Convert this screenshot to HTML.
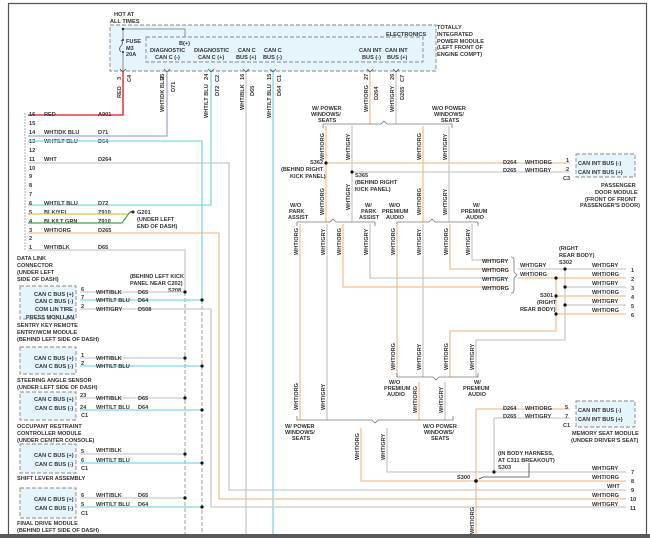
<!DOCTYPE html>
<html><head><meta charset="utf-8">
<style>
html,body{margin:0;padding:0;background:#fff;width:650px;height:538px;overflow:hidden}
svg{display:block}
text{font-family:"Liberation Sans",sans-serif;font-size:5.6px;fill:#333;font-weight:bold}
.o{stroke:#f5bf8e;stroke-width:1.3;fill:none}
.g{stroke:#c9c9c9;stroke-width:1.3;fill:none}
.c{stroke:#7ed9e3;stroke-width:1.3;fill:none}
.k{stroke:#777;stroke-width:0.8;fill:none}
.d{stroke:#888;stroke-width:0.8;stroke-dasharray:4 2;fill:none}
.bx{fill:#e6f5fb;stroke:#888;stroke-width:0.9;stroke-dasharray:4 2}
</style></head><body>
<svg width="650" height="538" viewBox="0 0 650 538">
<rect x="0" y="0" width="650" height="538" fill="#fff"/>
<!-- frame -->
<path d="M8.5 538 V3.5 H646.5 V535" stroke="#555" stroke-width="1.2" fill="none"/>
<rect x="0" y="534" width="650" height="4" fill="#5a5a5a"/>

<!-- TIPM -->
<rect x="110" y="25" width="326" height="46" class="bx"/>
<rect x="146" y="37" width="277" height="25" fill="none" stroke="#888" stroke-width="0.9" stroke-dasharray="4 2"/>
<path d="M123 29 H185 V37 M123 29 V40 M123 52 V71" class="k" stroke="#555"/>
<path d="M121 40 q3 3 0 6 q-3 3 0 6" fill="none" stroke="#555" stroke-width="0.8"/>
<circle cx="123" cy="29" r="1.2" fill="#222"/><circle cx="123" cy="40" r="1" fill="#222"/><circle cx="123" cy="52" r="1" fill="#222"/>
<text x="114" y="16">HOT AT</text><text x="110" y="23">ALL TIMES</text>
<text x="126" y="43">FUSE</text><text x="126" y="50">M3</text><text x="126" y="56">20A</text>
<text x="179" y="45">B(+)</text>
<text x="150" y="52">DIAGNOSTIC</text><text x="155" y="59">CAN C (-)</text>
<text x="194" y="52">DIAGNOSTIC</text><text x="198" y="59">CAN C (+)</text>
<text x="238" y="52">CAN C</text><text x="236" y="59">BUS (+)</text>
<text x="264" y="52">CAN C</text><text x="263" y="59">BUS (-)</text>
<text x="386" y="36">ELECTRONICS</text>
<text x="359" y="52">CAN INT</text><text x="362" y="59">BUS (-)</text>
<text x="385" y="52">CAN INT</text><text x="387" y="59">BUS (+)</text>
<text x="437" y="29">TOTALLY</text><text x="437" y="36">INTEGRATED</text><text x="437" y="43">POWER MODULE</text><text x="437" y="49">(LEFT FRONT OF</text><text x="437" y="56">ENGINE COMPT)</text>
<g fill="none" stroke="#555" stroke-width="0.8">
<path d="M120 69 l3 3 l3 -3 M164 69 l3 3 l3 -3 M208 69 l3 3 l3 -3 M243 69 l3 3 l3 -3 M270 69 l3 3 l3 -3 M367 69 l3 3 l3 -3 M393 69 l3 3 l3 -3"/>
</g>

<!-- top vertical wires -->
<path d="M123 72 V115 H28" stroke="#f03a3a" stroke-width="1.6" fill="none"/>
<path d="M167 72 V136 H28" stroke="#a3a7dc" stroke-width="1.3" fill="none"/>
<path d="M211 72 V205 H28" class="c"/>
<path d="M246 72 V534" class="g"/>
<path d="M273 72 V534" class="c"/>
<path d="M370 72 V124" class="o"/>
<path d="M396 72 V124" class="g"/>
<g transform="rotate(-90)">
<text x="-80" y="121">3</text><text x="-82" y="131">C4</text><text x="-98" y="121">RED</text>
<text x="-80" y="164">25</text><text x="-112" y="164">WHT/DK BLU</text><text x="-92" y="175">D71</text>
<text x="-80" y="208">24</text><text x="-82" y="219">C2</text><text x="-118" y="208">WHT/LT BLU</text><text x="-96" y="219">D72</text>
<text x="-80" y="244">16</text><text x="-110" y="244">WHT/BLK</text><text x="-96" y="254">D65</text>
<text x="-80" y="271">15</text><text x="-82" y="281">C1</text><text x="-118" y="271">WHT/LT BLU</text><text x="-96" y="281">D64</text>
<text x="-80" y="368">27</text><text x="-112" y="368">WHT/ORG</text><text x="-100" y="378">D264</text>
<text x="-80" y="394">26</text><text x="-82" y="404">C7</text><text x="-112" y="394">WHT/GRY</text><text x="-100" y="404">D265</text>
</g>

<!-- DLC pins -->
<path d="M25 113 V250" stroke="#777" stroke-width="0.6" stroke-dasharray="2 1" fill="none"/>
<g>
<text x="29" y="116">16</text><text x="29" y="125">15</text><text x="29" y="134">14</text><text x="29" y="143">13</text><text x="29" y="152">12</text><text x="29" y="161">11</text><text x="29" y="170">10</text><text x="29" y="178">9</text><text x="29" y="187">8</text><text x="29" y="196">7</text><text x="29" y="205">6</text><text x="29" y="214">5</text><text x="29" y="223">4</text><text x="29" y="232">3</text><text x="29" y="240">2</text><text x="29" y="249">1</text>
<text x="44" y="116">RED</text><text x="98" y="116">A901</text>
<text x="44" y="134">WHT/DK BLU</text><text x="98" y="134">D71</text>
<text x="44" y="143">WHT/LT BLU</text><text x="98" y="143">D64</text>
<text x="44" y="161">WHT</text><text x="98" y="161">D264</text>
<text x="44" y="205">WHT/LT BLU</text><text x="98" y="205">D72</text>
<text x="44" y="214">BLK/YEL</text><text x="98" y="214">Z910</text>
<text x="44" y="223">BLK/LT GRN</text><text x="98" y="223">Z910</text>
<text x="44" y="232">WHT/ORG</text><text x="98" y="232">D265</text>
<text x="44" y="249">WHT/BLK</text><text x="98" y="249">D65</text>
</g>
<path d="M28 141 H202 V300" class="c"/>
<path d="M28 163 H229 V490 H626" class="g"/>
<path d="M28 214 H128 L132 211" stroke="#d8c84a" stroke-width="1.2" fill="none"/>
<path d="M28 223 H122 L130 212" stroke="#4aa04a" stroke-width="1.2" fill="none"/>
<path d="M130 212 H133" stroke="#333" stroke-width="1"/><circle cx="133" cy="212" r="1.5" fill="#222"/>
<text x="137" y="214">G201</text><text x="137" y="221">(UNDER LEFT</text><text x="137" y="228">END OF DASH)</text>
<path d="M28 233 H219 V499 H626" class="o"/>
<path d="M28 250 H185 V292" class="g"/>
<text x="17" y="260">DATA LINK</text><text x="17" y="267">CONNECTOR</text><text x="17" y="274">(UNDER LEFT</text><text x="17" y="281">SIDE OF DASH)</text>
<text x="130" y="278">(BEHIND LEFT KICK</text><text x="130" y="285">PANEL NEAR C202)</text><text x="168" y="292">S208</text>

<!-- dashed splice bars -->
<path d="M185 292 V534" class="d"/>
<path d="M202 300 V534" class="d"/>

<!-- left modules -->
<rect x="20" y="286" width="56" height="33" class="bx"/>
<text x="34" y="296">CAN C BUS (+)</text><text x="35" y="303">CAN C BUS (-)</text><text x="35" y="311">COM LIN TIRE</text><text x="26" y="319">PRESS MONI LAN</text>
<text x="17" y="327">SENTRY KEY REMOTE</text><text x="17" y="334">ENTRY/WCM MODULE</text><text x="17" y="341">(BEHIND LEFT SIDE OF DASH)</text>
<path d="M80 292 H185 M80 309 H211 V507 H626" class="g"/><path d="M80 300 H202" class="c"/>
<text x="81" y="291">6</text><text x="81" y="299">7</text><text x="81" y="308">2</text>
<text x="96" y="294">WHT/BLK</text><text x="138" y="294">D65</text><text x="96" y="302">WHT/LT BLU</text><text x="138" y="302">D64</text><text x="96" y="311">WHT/GRY</text><text x="138" y="311">D508</text>

<rect x="20" y="347" width="56" height="27" class="bx"/>
<text x="34" y="360">CAN C BUS (+)</text><text x="35" y="368">CAN C BUS (-)</text>
<text x="17" y="382">STEERING ANGLE SENSOR</text><text x="17" y="389">(UNDER LEFT SIDE OF DASH)</text>
<path d="M80 358 H185" class="g"/><path d="M80 366 H202" class="c"/>
<text x="81" y="357">1</text><text x="81" y="365">2</text><text x="96" y="360">WHT/BLK</text><text x="96" y="368">WHT/LT BLU</text>

<rect x="20" y="392" width="56" height="28" class="bx"/>
<text x="34" y="401">CAN C BUS (+)</text><text x="35" y="410">CAN C BUS (-)</text>
<text x="17" y="428">OCCUPANT RESTRAINT</text><text x="17" y="435">CONTROLLER MODULE</text><text x="17" y="442">(UNDER CENTER CONSOLE)</text>
<path d="M80 398 H185" class="g"/><path d="M80 410 H202" class="c"/>
<text x="80" y="397">23</text><text x="80" y="409">24</text><text x="81" y="417">C1</text><text x="96" y="400">WHT/BLK</text><text x="138" y="400">D65</text><text x="96" y="409">WHT/LT BLU</text><text x="138" y="409">D64</text>

<rect x="20" y="444" width="56" height="29" class="bx"/>
<text x="34" y="457">CAN C BUS (+)</text><text x="35" y="466">CAN C BUS (-)</text>
<text x="17" y="480">SHIFT LEVER ASSEMBLY</text>
<path d="M80 454 H185" class="g"/><path d="M80 463 H202" class="c"/>
<text x="81" y="453">5</text><text x="81" y="462">6</text><text x="81" y="470">C1</text><text x="96" y="452">WHT/BLK</text><text x="96" y="462">WHT/LT BLU</text>

<rect x="20" y="488" width="56" height="30" class="bx"/>
<text x="34" y="501">CAN C BUS (+)</text><text x="35" y="510">CAN C BUS (-)</text>
<text x="17" y="525">FINAL DRIVE MODULE</text><text x="17" y="532">(BEHIND LEFT SIDE OF DASH)</text>
<path d="M80 498 H185" class="g"/><path d="M80 507 H202" class="c"/>
<text x="81" y="497">6</text><text x="81" y="506">5</text><text x="81" y="515">C1</text><text x="96" y="497">WHT/BLK</text><text x="138" y="497">D65</text><text x="96" y="506">WHT/LT BLU</text><text x="138" y="506">D64</text>

<g fill="#111">
<circle cx="185" cy="292" r="1.6"/><circle cx="202" cy="300" r="1.6"/>
<circle cx="185" cy="358" r="1.6"/><circle cx="202" cy="366" r="1.6"/>
<circle cx="185" cy="398" r="1.6"/><circle cx="202" cy="410" r="1.6"/>
<circle cx="185" cy="454" r="1.6"/><circle cx="202" cy="463" r="1.6"/>
<circle cx="185" cy="498" r="1.6"/><circle cx="202" cy="507" r="1.6"/>
</g>

<!-- right top section -->
<path d="M323 128 V124 H381 L384 121 L387 124 H452 V128" class="k"/>
<text x="312" y="110">W/ POWER</text><text x="311" y="116">WINDOWS/</text><text x="318" y="122">SEATS</text>
<text x="432" y="110">W/O POWER</text><text x="434" y="116">WINDOWS/</text><text x="441" y="122">SEATS</text>
<path d="M326 126 V222" class="o"/><path d="M352 126 V222" class="g"/>
<path d="M423 126 V222" class="o"/><path d="M449 126 V222" class="g"/>
<path d="M326 163 H570" class="o"/><path d="M352 172 H570" class="g"/>
<circle cx="326" cy="163" r="1.6" fill="#111"/><circle cx="352" cy="172" r="1.6" fill="#111"/>
<text x="310" y="164">S362</text><text x="281" y="171">(BEHIND RIGHT</text><text x="290" y="178">KICK PANEL)</text>
<text x="355" y="177">S365</text><text x="355" y="184">(BEHIND RIGHT</text><text x="355" y="191">KICK PANEL)</text>
<text x="503" y="164">D264</text><text x="525" y="164">WHT/ORG</text><text x="566" y="162">1</text>
<text x="503" y="172">D265</text><text x="525" y="172">WHT/GRY</text><text x="566" y="171">2</text><text x="563" y="180">C3</text>
<rect x="576" y="154" width="59" height="23" class="bx"/>
<text x="578" y="165">CAN INT BUS (-)</text><text x="578" y="174">CAN INT BUS (+)</text>
<text x="601" y="187">PASSENGER</text><text x="595" y="194">DOOR MODULE</text><text x="585" y="201">(FRONT OF FRONT</text><text x="580" y="207">PASSENGER'S DOOR)</text>

<!-- brace 222 -->
<path d="M297 226 V222 H330 L333 219 L336 222 H375 V226" class="k"/>
<path d="M397 226 V222 H429 L432 219 L435 222 H478 V226" class="k"/>
<text x="290" y="207">W/O</text><text x="289" y="213">PARK</text><text x="288" y="219">ASSIST</text>
<text x="365" y="207">W/</text><text x="361" y="213">PARK</text><text x="359" y="219">ASSIST</text>
<text x="389" y="207">W/O</text><text x="382" y="213">PREMIUM</text><text x="386" y="219">AUDIO</text>
<text x="473" y="207">W/</text><text x="461" y="213">PREMIUM</text><text x="466" y="219">AUDIO</text>
<path d="M300 224 V420" class="o"/><path d="M327 224 V420" class="g"/>
<path d="M343 224 V287 H508" class="o"/><path d="M370 224 V278 H508" class="g"/>
<path d="M397 224 V377" class="o"/><path d="M423 224 V377" class="g"/>
<path d="M450 224 V269 H508" class="o"/><path d="M472 224 V260 H508" class="g"/>
<text x="482" y="263">WHT/GRY</text><text x="482" y="272">WHT/ORG</text><text x="482" y="281">WHT/GRY</text><text x="482" y="290">WHT/ORG</text>
<path d="M511 257 Q514 257 514 260 V272 L517 275 L514 278 V290 Q514 293 511 293" class="k"/>
<path d="M518 269 H626" class="g"/><path d="M518 278 H626" class="o"/>
<text x="520" y="267">WHT/GRY</text><text x="520" y="276">WHT/ORG</text>
<path d="M565 269 V340 H476 V377" class="g"/><path d="M556 278 V331 H450 V377" class="o"/>
<path d="M565 287 H626 M565 305 H626" class="g"/><path d="M556 296 H626 M556 314 H626" class="o"/>
<g fill="#111"><circle cx="565" cy="269" r="1.6"/><circle cx="556" cy="278" r="1.6"/><circle cx="565" cy="287" r="1.6"/><circle cx="556" cy="296" r="1.6"/><circle cx="565" cy="305" r="1.6"/><circle cx="556" cy="314" r="1.6"/></g>
<text x="559" y="250">(RIGHT</text><text x="559" y="257">REAR BODY)</text><text x="559" y="264">S302</text>
<text x="540" y="297">S301</text><text x="537" y="304">(RIGHT</text><text x="520" y="311">REAR BODY)</text>
<text x="592" y="267">WHT/GRY</text><text x="592" y="276">WHT/ORG</text><text x="592" y="285">WHT/GRY</text><text x="592" y="294">WHT/ORG</text><text x="592" y="303">WHT/GRY</text><text x="592" y="312">WHT/ORG</text>
<text x="631" y="272">1</text><text x="631" y="281">2</text><text x="631" y="290">3</text><text x="631" y="299">4</text><text x="631" y="308">5</text><text x="631" y="317">6</text>

<!-- brace 377 -->
<path d="M397 373 V377 H433 L436 380 L439 377 H478 V373" class="k"/>
<text x="389" y="384">W/O</text><text x="384" y="390">PREMIUM</text><text x="387" y="396">AUDIO</text>
<text x="474" y="384">W/</text><text x="463" y="390">PREMIUM</text><text x="468" y="396">AUDIO</text>
<path d="M419 382 V420" class="o"/><path d="M445 382 V420" class="g"/>

<!-- brace 420 -->
<path d="M297 416 V420 H372 L375 423 L378 420 H453 V416" class="k"/>
<text x="285" y="428">W/ POWER</text><text x="285" y="434">WINDOWS/</text><text x="292" y="440">SEATS</text>
<text x="423" y="428">W/O POWER</text><text x="424" y="434">WINDOWS/</text><text x="431" y="440">SEATS</text>
<path d="M361 428 V481 H626" class="o"/><path d="M387 428 V472 H626" class="g"/>

<!-- memory seat -->
<path d="M476 534 V409 H570" class="o"/><path d="M494 472 V418 H570" class="g"/>
<text x="503" y="410">D264</text><text x="525" y="410">WHT/ORG</text><text x="565" y="409">5</text>
<text x="503" y="418">D265</text><text x="525" y="418">WHT/GRY</text><text x="565" y="418">7</text><text x="563" y="427">C1</text>
<rect x="576" y="401" width="59" height="26" class="bx"/>
<text x="578" y="412">CAN INT BUS (-)</text><text x="578" y="421">CAN INT BUS (+)</text>
<text x="572" y="435">MEMORY SEAT MODULE</text><text x="571" y="442">(UNDER DRIVER'S SEAT)</text>
<text x="498" y="455">(IN BODY HARNESS,</text><text x="498" y="462">AT C311 BREAKOUT)</text><text x="498" y="469">S303</text>
<path d="M529 463 V477 H483 L479 479" stroke="#444" stroke-width="0.8" fill="none"/>
<circle cx="494" cy="472" r="1.6" fill="#111"/><circle cx="476" cy="481" r="1.8" fill="#111"/>
<text x="457" y="479">S300</text>
<text x="592" y="470">WHT/GRY</text><text x="592" y="479">WHT/ORG</text><text x="607" y="488">WHT</text><text x="592" y="497">WHT/ORG</text><text x="592" y="506">WHT/GRY</text>
<text x="631" y="474">7</text><text x="631" y="483">8</text><text x="631" y="492">9</text><text x="630" y="501">10</text><text x="630" y="510">11</text>

<!-- rotated wire labels -->
<g transform="rotate(-90)" style="font-size:5px">
<text x="-160" y="324">WHT/ORG</text><text x="-160" y="350">WHT/GRY</text><text x="-160" y="421">WHT/ORG</text><text x="-160" y="447">WHT/GRY</text>
<text x="-215" y="324">WHT/ORG</text><text x="-210" y="350">WHT/GRY</text><text x="-215" y="421">WHT/ORG</text><text x="-215" y="447">WHT/GRY</text>
<text x="-255" y="298">WHT/ORG</text><text x="-255" y="325">WHT/GRY</text><text x="-255" y="341">WHT/ORG</text><text x="-255" y="368">WHT/GRY</text>
<text x="-255" y="395">WHT/ORG</text><text x="-255" y="421">WHT/GRY</text><text x="-255" y="448">WHT/ORG</text><text x="-255" y="470">WHT/GRY</text>
<text x="-370" y="395">WHT/ORG</text><text x="-370" y="421">WHT/GRY</text><text x="-370" y="448">WHT/ORG</text><text x="-370" y="474">WHT/GRY</text>
<text x="-410" y="298">WHT/ORG</text><text x="-410" y="325">WHT/GRY</text>
<text x="-413" y="417">WHT/ORG</text><text x="-413" y="443">WHT/GRY</text>
<text x="-460" y="359">WHT/ORG</text><text x="-460" y="385">WHT/GRY</text>
<text x="-534" y="474">WHT/ORG</text>
</g>
</svg>
</body></html>
